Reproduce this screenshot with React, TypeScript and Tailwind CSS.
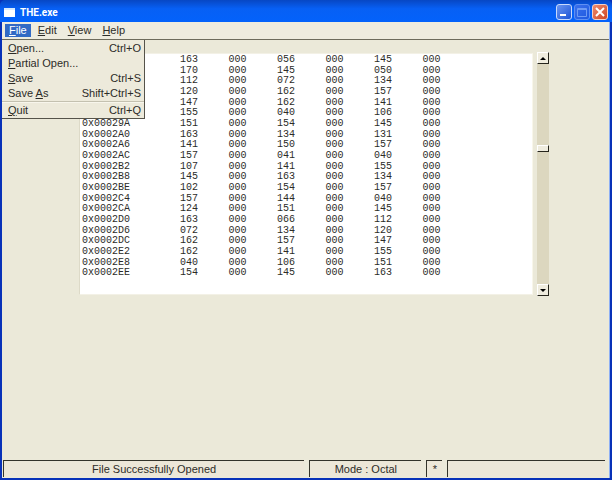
import type { ReactNode } from "react";

const rows: string[][] = [
  ["", "163", "056", "145"],
  ["", "170", "145", "050"],
  ["", "112", "072", "134"],
  ["", "120", "162", "157"],
  ["", "147", "162", "141"],
  ["", "155", "040", "106"],
  ["0x00029A", "151", "154", "145"],
  ["0x0002A0", "163", "134", "131"],
  ["0x0002A6", "141", "150", "157"],
  ["0x0002AC", "157", "041", "040"],
  ["0x0002B2", "107", "141", "155"],
  ["0x0002B8", "145", "163", "134"],
  ["0x0002BE", "102", "154", "157"],
  ["0x0002C4", "157", "144", "040"],
  ["0x0002CA", "124", "151", "145"],
  ["0x0002D0", "163", "066", "112"],
  ["0x0002D6", "072", "134", "120"],
  ["0x0002DC", "162", "157", "147"],
  ["0x0002E2", "162", "141", "155"],
  ["0x0002E8", "040", "106", "151"],
  ["0x0002EE", "154", "145", "163"],
];

function MenuItem({ label, keys }: { label: ReactNode; keys?: string }) {
  return (
    <button role="menuitem" className="flex h-[15px] w-full items-center justify-between pr-[3px] pl-[6px] text-left">
      <span>{label}</span>
      {keys && <span>{keys}</span>}
    </button>
  );
}

function MenuTitle({ first, rest, open }: { first: string; rest: string; open?: boolean }) {
  return (
    <button aria-expanded={!!open} className={open ? "h-[13px] bg-[#316ac5] px-1 text-white" : "h-[13px] px-1"}>
      <u>{first}</u>
      {rest}
    </button>
  );
}

function ScrollButton({ label, up }: { label: string; up?: boolean }) {
  return (
    <button
      aria-label={label}
      className="flex h-3 w-3 items-center justify-center border border-t-white border-r-[#26251c] border-b-[#26251c] border-l-white bg-[#efecde]"
    >
      <svg width="6" height="3" viewBox="0 0 6 3" className="fill-black">
        <path d={up ? "M0 3 3 0 6 3z" : "M0 0 3 3 6 0z"} />
      </svg>
    </button>
  );
}

function StatusCell({ children }: { children?: ReactNode }) {
  return (
    <div className="h-[17px] border-t border-l border-[#33332a] bg-[#ece7d8] text-center leading-4 whitespace-nowrap">
      {children}
    </div>
  );
}

export default function App() {
  return (
    <div className="flex min-h-screen flex-col bg-[#0831b8] pr-[2px] pb-[2px] pl-[2px] font-['Liberation_Sans',Arial,sans-serif] text-[11px] text-[#2c2c28]">
      <header className="-mx-[2px] flex h-[22px] items-center rounded-t-[5px] bg-linear-to-b from-[#0747c4] via-[#0760f5] via-40% to-[#0362fb] pt-[2px] pr-[4px] pl-[4px]">
        <svg width="11" height="9" viewBox="0 0 11 9" aria-hidden="true">
          <rect width="11" height="9" fill="#fff" />
          <path d="M0 0h11v2H0z" fill="#d8ebff" />
        </svg>
        <h1 className="ml-[5px] flex-1 font-[Roboto,sans-serif] text-[10px] font-bold text-white">THE.exe</h1>
        <div className="flex gap-[2px]">
          <button aria-label="Minimize" className="h-4 w-4 rounded-[3px] border border-[#c8dafc] bg-linear-to-br from-[#6a95f0] to-[#1b52d6]">
            <svg width="14" height="14" viewBox="0 0 14 14">
              <path d="M3 9h6v2H3z" fill="#fff" />
            </svg>
          </button>
          <button aria-label="Maximize" className="h-4 w-4 rounded-[3px] border border-[#5f8ff2] bg-linear-to-br from-[#3a70ec] to-[#1d58e0]">
            <svg width="14" height="14" viewBox="0 0 14 14">
              <path d="M2.5 3.5h9v8h-9zM2 4.500h10" fill="none" stroke="#6f9bf4" />
            </svg>
          </button>
          <button aria-label="Close" className="h-4 w-4 rounded-[3px] border border-[#f3d0c6] bg-linear-to-br from-[#ec8a6d] to-[#cf4420]">
            <svg width="14" height="14" viewBox="0 0 14 14">
              <path d="M3 3l8 8M11 3l-8 8" stroke="#fff" strokeWidth="2" />
            </svg>
          </button>
        </div>
      </header>

      <div className="flex flex-1 flex-col border-r border-[#8eb0f5] bg-[#ebe9d9]">
        <nav className="relative flex h-[18px] items-center gap-[3px] border-b border-[#6d6b5c] bg-[#eeecdf] pl-[3px] leading-[13px]">
          <MenuTitle first="F" rest="ile" open />
          <MenuTitle first="E" rest="dit" />
          <MenuTitle first="V" rest="iew" />
          <MenuTitle first="H" rest="elp" />
          <div
            role="menu"
            className="absolute top-[18px] left-0 z-10 w-[143px] border-r border-b border-[#55534a] bg-[#edeadb] pt-px"
          >
            <MenuItem label={<><u>O</u>pen...</>} keys="Ctrl+O" />
            <MenuItem label={<><u>P</u>artial Open...</>} />
            <MenuItem label={<><u>S</u>ave</>} keys="Ctrl+S" />
            <MenuItem label={<>Save <u>A</u>s</>} keys="Shift+Ctrl+S" />
            <hr className="h-[2px] border-t border-b border-t-[#c4c1b0] border-b-[#f8f6ec]" />
            <MenuItem label={<><u>Q</u>uit</>} keys="Ctrl+Q" />
          </div>
        </nav>

        <main className="flex flex-1 items-start gap-1 pt-3 pr-[60px] pl-[77px]">
          <section className="mt-px h-[242px] flex-1 border border-t-[#f3f1e6] border-r-[#f8f6ea] border-b-[#f3f1e6] border-l-[#dddac8] bg-white pt-px pl-[2px]">
            <table className="block w-[389px] font-['Liberation_Mono',monospace] text-[10px] leading-[10px]">
              <tbody className="flex h-[224px] flex-col">
                {rows.map(([address, a, b, c], index) => (
                  <tr key={index} className="grid flex-1 grid-cols-[98px_repeat(6,1fr)]">
                    <th scope="row" className="text-left font-normal">{address}</th>
                    <td>{a}</td>
                    <td>000</td>
                    <td>{b}</td>
                    <td>000</td>
                    <td>{c}</td>
                    <td>000</td>
                  </tr>
                ))}
              </tbody>
            </table>
          </section>
          <div className="flex h-[244px] w-3 flex-col bg-[#dcd7bf]">
            <ScrollButton label="Scroll up" up />
            <div className="flex flex-1 flex-col pt-[81px]">
              <div className="h-[7px] border border-t-white border-r-[#26251c] border-b-[#26251c] border-l-white bg-[#efecde]" />
            </div>
            <ScrollButton label="Scroll down" />
          </div>
        </main>

        <footer className="grid grid-cols-[302fr_112px_16px_158fr] gap-[5px] pr-[4px] pb-px pl-px">
          <StatusCell>File Successfully Opened</StatusCell>
          <StatusCell>Mode : Octal</StatusCell>
          <StatusCell>*</StatusCell>
          <StatusCell />
        </footer>
      </div>
    </div>
  );
}
